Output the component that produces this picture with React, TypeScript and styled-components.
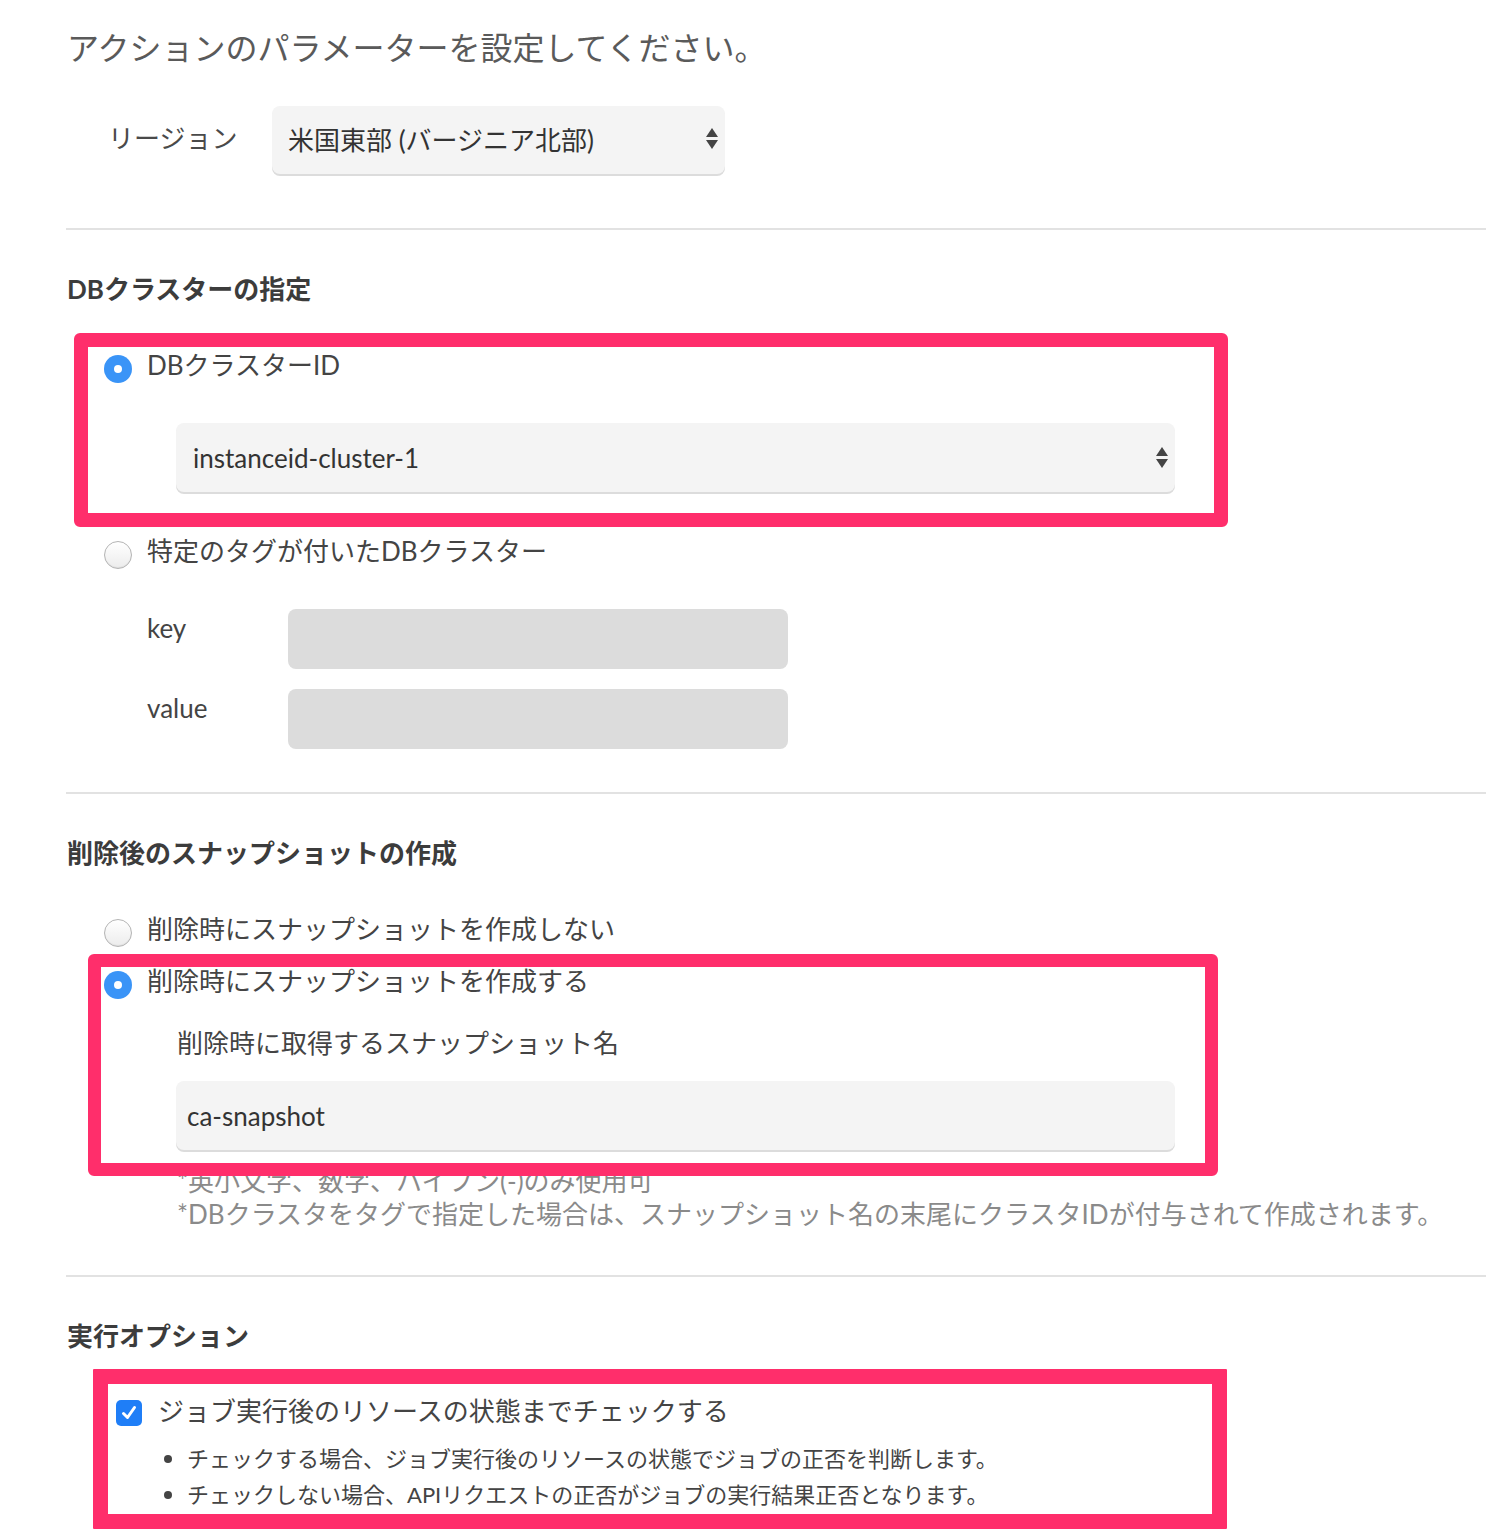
import React from "react";
import styled, { createGlobalStyle } from "styled-components";

const GlobalStyle = createGlobalStyle`
  html, body { margin: 0; padding: 0; background: #fff; }
  body { font-family: Lato, "Noto Sans CJK JP", sans-serif; color: #444; }
  * { box-sizing: border-box; }
`;

const Page = styled.div`
  position: relative;
  width: 1486px;
  min-height: 1534px;
  padding: 28px 0 0 67px;
  overflow: hidden;
`;

const Title = styled.h1`
  margin: 0;
  font-size: 32px;
  font-weight: 400;
  line-height: 40px;
  color: #5a5a5a;
`;

const RegionRow = styled.div`
  display: flex;
  align-items: center;
  margin-top: 38px;
  padding-left: 41px;
`;

const RegionLabel = styled.div`
  width: 164px;
  font-size: 26px;
  line-height: 36px;
  padding-bottom: 4px;
  color: #4a4a4a;
`;

const SelectBox = styled.div<{ $w: number; $h: number; $pl: number; $ml?: number; $mt?: number; $pb?: number }>`
  display: flex;
  align-items: center;
  justify-content: space-between;
  width: ${(p) => p.$w}px;
  height: ${(p) => p.$h}px;
  margin-left: ${(p) => p.$ml ?? 0}px;
  margin-top: ${(p) => p.$mt ?? 0}px;
  padding: 0 7px ${(p) => p.$pb ?? 0}px ${(p) => p.$pl}px;
  background: #f4f4f4;
  border-radius: 8px;
  box-shadow: 0 2px 0 #dcdcdc;
  font-size: 26px;
  color: #333;
`;

const Arrows = styled.span`
  display: flex;
  flex-direction: column;
  gap: 3px;
  &::before, &::after {
    content: "";
    display: block;
    width: 0;
    height: 0;
    border-left: 6px solid transparent;
    border-right: 6px solid transparent;
  }
  &::before { border-bottom: 9px solid #444; }
  &::after { border-top: 9px solid #444; }
`;

const Divider = styled.div<{ $mt: number }>`
  height: 2px;
  margin-top: ${(p) => p.$mt}px;
  margin-left: -1px;
  background: #e2e2e2;
`;

const Heading = styled.h2`
  margin: 41px 0 0;
  font-size: 26px;
  font-weight: 700;
  line-height: 36px;
  color: #3c3c3c;
`;

const OptionRow = styled.label<{ $mt: number }>`
  display: flex;
  align-items: flex-start;
  gap: 15px;
  margin-top: ${(p) => p.$mt}px;
  padding-left: 37px;
  font-size: 26px;
  line-height: 36px;
  color: #444;
`;

const Radio = styled.span<{ $on?: boolean }>`
  flex: none;
  width: 28px;
  height: 28px;
  margin-top: 8px;
  border-radius: 50%;
  position: relative;
  background: ${(p) => (p.$on ? "#3a94f7" : "linear-gradient(#ffffff, #ececec)")};
  border: ${(p) => (p.$on ? "none" : "1px solid #b4b4b4")};
  box-shadow: ${(p) => (p.$on ? "none" : "inset 0 -1px 1px rgba(0,0,0,0.06)")};
  &::after {
    content: "";
    display: ${(p) => (p.$on ? "block" : "none")};
    position: absolute;
    left: 10px;
    top: 10px;
    width: 8px;
    height: 8px;
    border-radius: 50%;
    background: #fff;
  }
`;

const KVRow = styled.div<{ $mt: number }>`
  display: flex;
  align-items: flex-start;
  margin-top: ${(p) => p.$mt}px;
  padding-left: 80px;
`;

const KVLabel = styled.div`
  width: 141px;
  margin-top: 1px;
  font-size: 26px;
  line-height: 36px;
  color: #444;
`;

const GrayInput = styled.div`
  width: 500px;
  height: 60px;
  border-radius: 8px;
  background: #dcdcdc;
`;

const SubLabel = styled.div`
  margin-top: 26px;
  padding-left: 110px;
  font-size: 26px;
  line-height: 36px;
  color: #444;
`;

const Hints = styled.div`
  margin-top: 15px;
  padding-left: 110px;
  font-size: 26px;
  line-height: 33px;
  color: #8a8a8a;
`;

const CheckRow = styled.label`
  display: flex;
  align-items: flex-start;
  gap: 16px;
  margin-top: 39px;
  padding-left: 49px;
  font-size: 26px;
  line-height: 36px;
  color: #444;
`;

const CheckBox = styled.span`
  flex: none;
  width: 26px;
  height: 26px;
  margin-top: 7px;
  border-radius: 5px;
  background: #1f7ef7;
  display: flex;
  align-items: center;
  justify-content: center;
`;

const Bullets = styled.ul`
  margin: 12px 0 0;
  padding: 0 0 0 97px;
  list-style: none;
  font-size: 22px;
  line-height: 36px;
  color: #444;
`;

const Bullet = styled.li`
  display: flex;
  align-items: center;
  gap: 15px;
  &::before {
    content: "";
    flex: none;
    width: 8px;
    height: 8px;
    border-radius: 50%;
    background: #444;
  }
`;

const Highlight = styled.div<{ $x: number; $y: number; $w: number; $h: number; $b: number; $r: number }>`
  position: absolute;
  left: ${(p) => p.$x}px;
  top: ${(p) => p.$y}px;
  width: ${(p) => p.$w}px;
  height: ${(p) => p.$h}px;
  border: ${(p) => p.$b}px solid #ff2e6b;
  border-radius: ${(p) => p.$r}px;
  pointer-events: none;
`;

export default function App() {
  return (
    <>
      <GlobalStyle />
      <Page>
        <Title>アクションのパラメーターを設定してください。</Title>

        <RegionRow>
          <RegionLabel>リージョン</RegionLabel>
          <SelectBox $w={453} $h={68} $pl={16} $pb={4}>
            <span>米国東部 (バージニア北部)</span>
            <Arrows />
          </SelectBox>
        </RegionRow>

        <Divider $mt={54} />

        <Heading>DBクラスターの指定</Heading>
        <OptionRow $mt={40}>
          <Radio $on />
          <span>DBクラスターID</span>
        </OptionRow>
        <SelectBox $w={999} $h={69} $pl={17} $ml={109} $mt={40}>
          <span>instanceid-cluster-1</span>
          <Arrows />
        </SelectBox>
        <OptionRow $mt={41}>
          <Radio />
          <span>特定のタグが付いたDBクラスター</span>
        </OptionRow>
        <KVRow $mt={40}>
          <KVLabel>key</KVLabel>
          <GrayInput />
        </KVRow>
        <KVRow $mt={20}>
          <KVLabel>value</KVLabel>
          <GrayInput />
        </KVRow>

        <Divider $mt={43} />

        <Heading>削除後のスナップショットの作成</Heading>
        <OptionRow $mt={40}>
          <Radio />
          <span>削除時にスナップショットを作成しない</span>
        </OptionRow>
        <OptionRow $mt={16}>
          <Radio $on />
          <span>削除時にスナップショットを作成する</span>
        </OptionRow>
        <SubLabel>削除時に取得するスナップショット名</SubLabel>
        <SelectBox $w={999} $h={69} $pl={11} $ml={109} $mt={20}>
          <span>ca-snapshot</span>
        </SelectBox>
        <Hints>
          <div>*英小文字、数字、ハイフン(-)のみ使用可</div>
          <div>*DBクラスタをタグで指定した場合は、スナップショット名の末尾にクラスタIDが付与されて作成されます。</div>
        </Hints>

        <Divider $mt={44} />

        <Heading>実行オプション</Heading>
        <CheckRow>
          <CheckBox>
            <svg width="18" height="18" viewBox="0 0 18 18">
              <path d="M3.5 9.5 L7.5 13.5 L14.5 3.5" fill="none" stroke="#fff" strokeWidth="3" strokeLinecap="round" strokeLinejoin="round" />
            </svg>
          </CheckBox>
          <span>ジョブ実行後のリソースの状態までチェックする</span>
        </CheckRow>
        <Bullets>
          <Bullet>チェックする場合、ジョブ実行後のリソースの状態でジョブの正否を判断します。</Bullet>
          <Bullet>チェックしない場合、APIリクエストの正否がジョブの実行結果正否となります。</Bullet>
        </Bullets>

        <Highlight $x={74} $y={333} $w={1154} $h={194} $b={14} $r={6} />
        <Highlight $x={88} $y={954} $w={1130} $h={222} $b={13} $r={6} />
        <Highlight $x={93} $y={1369} $w={1134} $h={160} $b={15} $r={1} />
      </Page>
    </>
  );
}
